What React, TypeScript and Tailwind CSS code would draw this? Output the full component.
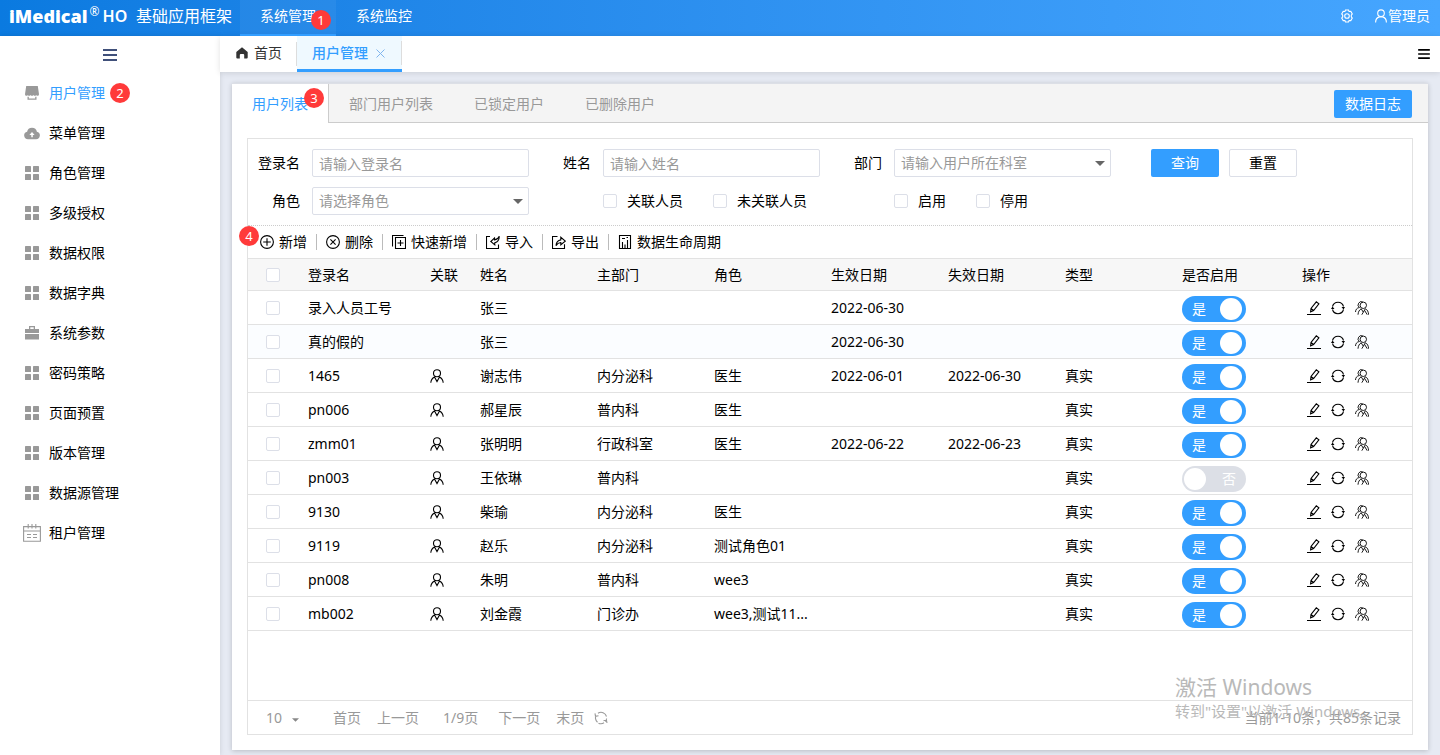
import { useState } from "react";
import type { ReactNode } from "react";

function Svg({
  children,
  size = 14,
  box = 14,
  className = "",
}: {
  children: ReactNode;
  size?: 12 | 14 | 16 | 18;
  box?: number;
  className?: string;
}) {
  const sizes = { 12: "size-3", 14: "size-[14px]", 16: "size-4", 18: "size-[18px]" };
  return (
    <svg
      aria-hidden
      viewBox={`0 0 ${box} ${box}`}
      fill="none"
      stroke="currentColor"
      strokeWidth="1.1"
      className={`shrink-0 ${sizes[size]} ${className}`}
    >
      {children}
    </svg>
  );
}

const GridIcon = () => (
  <Svg size={16} box={16}>
    <g fill="currentColor" stroke="none">
      <rect x="1" y="1" width="6" height="6" rx=".6" />
      <rect x="9" y="1" width="6" height="6" rx=".6" />
      <rect x="1" y="9" width="6" height="6" rx=".6" />
      <rect x="9" y="9" width="6" height="6" rx=".6" />
    </g>
  </Svg>
);

const StoreIcon = () => (
  <Svg size={16} box={16}>
    <g fill="currentColor" stroke="none">
      <path d="M2.200 1h11.600l1.200 8.200q0 1.600-1.400 1.600-1 0-1.400-.9-.5.9-1.400.9T9.400 9.900q-.5.9-1.400.9t-1.400-.9q-.5.9-1.400.9t-1.400-.9q-.4.9-1.400.9Q1 10.800 1 9.200z" />
      <path d="M3.500 11.800h1.300v1.700h6.400v-1.700h1.300v3h-9z" />
    </g>
  </Svg>
);

const CloudIcon = () => (
  <Svg size={16} box={16}>
    <path
      fill="currentColor"
      stroke="none"
      fillRule="evenodd"
      d="M4 14.200a3.800 3.800 0 0 1-.9-7.500A5 5 0 0 1 12.900 6.700 3.800 3.800 0 0 1 12 14.200zM7.300 12.300h1.500V9.900h1.800L8 7 5.400 9.900h1.900z"
    />
  </Svg>
);

const CaseIcon = () => (
  <Svg size={16} box={16}>
    <g fill="currentColor" stroke="none">
      <path fillRule="evenodd" d="M5 1h6v3h4v4H1V4h4zM6.300 2.300V4h3.400V2.300z" />
      <path d="M1 9h14v5.500H1z" />
    </g>
  </Svg>
);

const CalendarIcon = () => (
  <Svg size={18} box={18}>
    <path d="M.6 2.600h16.800v14.600H.6zM.6 7h16.800M5.200 0v4.500M9 0v4.500M12.800 0v4.500M4 10.500h4M10 10.500h4M4 13.500h4M10 13.500h4" />
  </Svg>
);

const HomeIcon = () => (
  <Svg size={12} box={12}>
    <path
      fill="currentColor"
      stroke="none"
      d="M6 .3 11.700 5v5.500q0 1-1 1H8.200V8q0-1-1-1H4.800q-1 0-1 1v3.500H1.300q-1 0-1-1V5z"
    />
  </Svg>
);

const GearIcon = () => (
  <Svg>
    <path d="M5.500 1h3l.6 1.500 1.700-.1 1.500 2.500-1 1.400v1.400l1 1.400-1.500 2.500-1.700-.1L8.500 13h-3l-.6-1.500-1.700.1-1.500-2.500 1-1.400V6.300l-1-1.400 1.500-2.500 1.700.1z" />
    <circle cx="7" cy="7" r="2.300" />
  </Svg>
);

const UserIcon = () => (
  <Svg>
    <circle cx="7" cy="4.200" r="3.300" />
    <path d="M1.600 13.500c0-3 1.400-5 3.800-5.600h3.200c2.400.6 3.800 2.600 3.800 5.600" />
  </Svg>
);

const LinkedUserIcon = () => (
  <Svg>
    <circle cx="7" cy="4.200" r="3.500" />
    <path d="M.8 13.800c.2-2.800 1.200-4.500 3.700-5.800L7 12.600 9.500 8c2.500 1.300 3.500 3 3.700 5.800" />
  </Svg>
);

const PlusCircleIcon = () => (
  <Svg>
    <circle cx="7" cy="7" r="6.400" />
    <path d="M7 3.200v7.600M3.200 7h7.600" />
  </Svg>
);

const CrossCircleIcon = () => (
  <Svg>
    <circle cx="7" cy="7" r="6.400" />
    <path d="m4.400 4.400 5.200 5.200M9.600 4.400 4.400 9.600" />
  </Svg>
);

const QuickAddIcon = () => (
  <Svg>
    <path d="M3.500 2.500h10v11h-10zM.5 11.500V.5h11M8.500 5v6M5.500 8h6" />
  </Svg>
);

const ImportIcon = () => (
  <Svg>
    <path d="M4 1.500H.5v12h12v-4M13.300 1.200c-1 2.300-2.300 3.400-4.800 3.700V3L4.800 6.500l4 3.300V7.700c2.800-.6 4.400-2.700 4.500-6.500z" />
  </Svg>
);

const ExportIcon = () => (
  <Svg>
    <path d="M5.500 1.500h-5v12h12V9.200M4 10.600c.3-3.300 1.700-5.200 4.800-5.700V2.300l4.500 3.900-4.500 3.600V7.500C6.800 7.700 5.300 8.600 4 10.600z" />
  </Svg>
);

const ChartIcon = () => (
  <Svg>
    <path d="M1.500.5h11v13h-11zM4.500 13.500V7M7 13.500v-4M9.500 13.500V5M4 3.500h3M8.500 2.500h1.500" />
  </Svg>
);

const EditIcon = () => (
  <Svg>
    <path d="M0 13.500h14M3.600 10.800l.4-3.300L9.300.8l2.600 2-5.300 6.700zM4 7.500l2.600 2" />
  </Svg>
);

const SyncIcon = () => (
  <Svg>
    <path d="M1.500 5.500a5.700 5.700 0 0 1 11 0M1.500 8.500a5.700 5.700 0 0 0 11 0" />
    <path fill="currentColor" stroke="none" d="M10.500 6H14l-1.500 2.500zM3.500 8H0l1.500-2.500z" />
  </Svg>
);

const GroupIcon = () => (
  <Svg>
    <g strokeWidth=".9">
      <circle cx="8.300" cy="4.300" r="3.200" />
      <path d="M4.700 6.700A2.900 2.900 0 1 1 8 1.100M.5 11c.1-2.300 1.200-3.900 3.700-4.500M3 13.700c.2-2.900 1.300-4.800 3.200-5.900l2.100 3.400 2-3.400c2.200.9 3.100 2.900 3.300 5.900M8.300 11.200 6.800 13.700M9.600 9.400l2.600 4.300" />
    </g>
  </Svg>
);

const ReloadIcon = () => (
  <Svg>
    <path d="M4 2.200a5.600 5.600 0 0 1 8.500 3.300M1.500 4.300v3.400a5.600 5.600 0 0 0 2 3.500M10 11.800a5.600 5.600 0 0 1-5.500.4M12.600 7.500a5.600 5.600 0 0 1-1.200 3.200M1 2.300l.5 3 3-.6M13 12l-.6-3-2.900.7" />
  </Svg>
);

const Bars = ({ className }: { className: string }) => (
  <svg aria-hidden viewBox="0 0 14 12" className={className} fill="currentColor">
    <path d="M0 0h14v2H0zM0 5h14v2H0zM0 10h14v2H0z" />
  </svg>
);

function Badge({ children, className = "" }: { children: ReactNode; className?: string }) {
  return (
    <span
      className={`flex size-5 items-center justify-center rounded-full bg-[#ff3a3a] text-[13px] leading-5 text-white ${className}`}
    >
      {children}
    </span>
  );
}

const checkboxCls =
  "block size-[14px] shrink-0 appearance-none rounded-[2px] border border-[#dcdfe8] bg-white checked:bg-[#339eff]";
const inputCls =
  "block h-7 w-full appearance-none rounded-[2px] border border-[#dcdfe8] bg-white px-[6px] text-sm leading-5 text-[#999] outline-none placeholder:text-[#999]";

function Field({ id, label, children }: { id: string; label: string; children: ReactNode }) {
  return (
    <div className="flex w-[291px] items-center pr-[10px]">
      <label htmlFor={id} className="mr-3 w-[52px] text-right">
        {label}
      </label>
      <div className="relative flex-1">{children}</div>
    </div>
  );
}

function Select({ id, placeholder }: { id: string; placeholder: string }) {
  return (
    <>
      <select id={id} className={inputCls}>
        <option>{placeholder}</option>
      </select>
      <svg
        aria-hidden
        viewBox="0 0 10 5"
        className="pointer-events-none absolute top-[12px] right-[6px] h-[5px] w-[10px] fill-[#666]"
      >
        <path d="M0 0h10L5 5z" />
      </svg>
    </>
  );
}

function Check({ label }: { label: string }) {
  return (
    <label className="mr-[30px] flex items-center gap-[10px] whitespace-nowrap">
      <input type="checkbox" className={checkboxCls} />
      {label}
    </label>
  );
}

function Switch({ name, initial }: { name: string; initial: boolean }) {
  const [on, setOn] = useState(initial);
  return (
    <label
      className={`relative flex h-[26px] w-16 items-center rounded-full px-[10px] text-white ${
        on ? "bg-[#339eff]" : "justify-end bg-[#dcdfe6]"
      }`}
    >
      <input
        type="checkbox"
        aria-label={`${name} 是否启用`}
        checked={on}
        onChange={() => setOn(!on)}
        className="absolute inset-0 size-full appearance-none rounded-full"
      />
      <span>{on ? "是" : "否"}</span>
      <span
        className={`pointer-events-none absolute top-[2px] size-[22px] rounded-full bg-white ${
          on ? "right-1" : "left-[2px]"
        }`}
      />
    </label>
  );
}

const MENU: { label: string; icon: () => ReactNode }[] = [
  { label: "用户管理", icon: StoreIcon },
  { label: "菜单管理", icon: CloudIcon },
  { label: "角色管理", icon: GridIcon },
  { label: "多级授权", icon: GridIcon },
  { label: "数据权限", icon: GridIcon },
  { label: "数据字典", icon: GridIcon },
  { label: "系统参数", icon: CaseIcon },
  { label: "密码策略", icon: GridIcon },
  { label: "页面预置", icon: GridIcon },
  { label: "版本管理", icon: GridIcon },
  { label: "数据源管理", icon: GridIcon },
  { label: "租户管理", icon: CalendarIcon },
];

const TOOLS: { label: string; icon: () => ReactNode }[] = [
  { label: "新增", icon: PlusCircleIcon },
  { label: "删除", icon: CrossCircleIcon },
  { label: "快速新增", icon: QuickAddIcon },
  { label: "导入", icon: ImportIcon },
  { label: "导出", icon: ExportIcon },
  { label: "数据生命周期", icon: ChartIcon },
];

const HEADERS = ["登录名", "关联", "姓名", "主部门", "角色", "生效日期", "失效日期", "类型", "是否启用", "操作"];

type Row = {
  login: string;
  linked: boolean;
  name: string;
  dept?: string;
  role?: string;
  from?: string;
  to?: string;
  type?: string;
  on: boolean;
};

const ROWS: Row[] = [
  { login: "录入人员工号", linked: false, name: "张三", from: "2022-06-30", on: true },
  { login: "真的假的", linked: false, name: "张三", from: "2022-06-30", on: true },
  { login: "1465", linked: true, name: "谢志伟", dept: "内分泌科", role: "医生", from: "2022-06-01", to: "2022-06-30", type: "真实", on: true },
  { login: "pn006", linked: true, name: "郝星辰", dept: "普内科", role: "医生", type: "真实", on: true },
  { login: "zmm01", linked: true, name: "张明明", dept: "行政科室", role: "医生", from: "2022-06-22", to: "2022-06-23", type: "真实", on: true },
  { login: "pn003", linked: true, name: "王依琳", dept: "普内科", type: "真实", on: false },
  { login: "9130", linked: true, name: "柴瑜", dept: "内分泌科", role: "医生", type: "真实", on: true },
  { login: "9119", linked: true, name: "赵乐", dept: "内分泌科", role: "测试角色01", type: "真实", on: true },
  { login: "pn008", linked: true, name: "朱明", dept: "普内科", role: "wee3", type: "真实", on: true },
  { login: "mb002", linked: true, name: "刘金霞", dept: "门诊办", role: "wee3,测试11...", type: "真实", on: true },
];

function TopBar() {
  return (
    <header className="flex h-9 items-stretch bg-linear-to-r from-[#0a7ae0] to-[#46a6ff] text-white">
      <div className="flex w-60 items-center pb-1 pl-[9px]">
        <span className="font-['Open_Sans'] text-lg leading-5 font-extrabold">iMedical</span>
        <span className="mb-2 ml-[2px] text-xs leading-4">®</span>
        <span className="ml-[3px] text-base leading-5 font-semibold">HO</span>
        <span className="ml-auto pr-2 text-base leading-5">基础应用框架</span>
      </div>
      <nav className="flex">
        <a href="#system" className="relative flex w-24 items-center justify-center border-b-2 border-[#339eff] bg-white/5 pb-[2px]">
          系统管理
          <Badge className="absolute top-[10px] right-[5px]">1</Badge>
        </a>
        <a href="#monitor" className="flex w-24 items-center justify-center pb-1">
          系统监控
        </a>
      </nav>
      <div className="ml-auto flex items-center gap-5 pr-[10px] pb-1">
        <button aria-label="设置">
          <GearIcon />
        </button>
        <button className="flex items-center">
          <UserIcon />
          管理员
        </button>
      </div>
    </header>
  );
}

function Sidebar() {
  return (
    <aside className="w-[220px] shrink-0 bg-white shadow-[0_0_5px_rgba(0,0,0,0.12)]">
      <button aria-label="收起菜单" className="flex h-[37px] w-full items-center justify-center text-[#40507a]">
        <Bars className="h-3 w-[14px]" />
      </button>
      <nav>
        {MENU.map(({ label, icon: Icon }, i) => (
          <a key={label} href={`#menu-${i}`} className="flex h-10 items-center pl-[22px]">
            <span className="flex w-[27px] items-center text-[#999]">
              <span className="flex w-[20px] justify-center">
                <Icon />
              </span>
            </span>
            <span className={i === 0 ? "text-[#339eff]" : ""}>{label}</span>
            {i === 0 ? <Badge className="ml-[5px]">2</Badge> : null}
          </a>
        ))}
      </nav>
    </aside>
  );
}

function PageTabs() {
  return (
    <div className="flex h-9 items-center bg-white shadow-[0_1px_6px_rgba(0,0,0,0.12)]">
      <button className="flex h-6 w-[77px] items-center gap-[6px] border-r border-[#ddd] pb-[2px] pl-4 text-[#333]">
        <HomeIcon />
        首页
      </button>
      <div className="flex h-9 w-[105px] items-center border-b-[3px] border-[#339eff] bg-[#eff9ff] pt-px pl-[15px] text-[#339eff]">
        <button className="font-medium">用户管理</button>
        <button aria-label="关闭" className="ml-2">
          <svg viewBox="0 0 9 9" className="size-[9px] stroke-[#7fb5ee]" fill="none">
            <path d="m.5.5 8 8M8.500.5l-8 8" />
          </svg>
        </button>
        <span className="ml-auto h-6 w-px bg-[#ddd]" />
      </div>
      <button aria-label="更多" className="mr-[10px] ml-auto">
        <Bars className="h-[10px] w-3" />
      </button>
    </div>
  );
}

function PanelTabs() {
  return (
    <div className="flex h-[39px] bg-[#f4f4f4]">
      <button className="relative border-r border-[#ccc] bg-white px-5 text-[#339eff]">
        用户列表
        <Badge className="absolute top-1 right-1">3</Badge>
      </button>
      <div className="flex flex-1 items-center border-b border-[#ccc] pt-[2px] pr-4 text-[#999]">
        {["部门用户列表", "已锁定用户", "已删除用户"].map((tab) => (
          <button key={tab} className="h-full border-r border-transparent px-5">
            {tab}
          </button>
        ))}
        <button className="ml-auto h-7 w-[78px] rounded-[2px] bg-[#339eff] text-white">数据日志</button>
      </div>
    </div>
  );
}

function SearchForm() {
  return (
    <form className="border-b border-dotted border-[#ccc] py-[10px]" onSubmit={(e) => e.preventDefault()}>
      <div className="flex">
        <Field id="login" label="登录名">
          <input id="login" placeholder="请输入登录名" className={inputCls} />
        </Field>
        <Field id="name" label="姓名">
          <input id="name" placeholder="请输入姓名" className={inputCls} />
        </Field>
        <Field id="dept" label="部门">
          <Select id="dept" placeholder="请输入用户所在科室" />
        </Field>
        <button className="ml-[30px] h-7 w-[68px] rounded-[2px] bg-[#339eff] text-white">查询</button>
        <button type="reset" className="ml-[10px] h-7 w-[68px] rounded-[2px] border border-[#dcdfe8] bg-white">
          重置
        </button>
      </div>
      <div className="mt-[10px] flex">
        <Field id="role" label="角色">
          <Select id="role" placeholder="请选择角色" />
        </Field>
        <div className="flex w-[291px] pl-16">
          <Check label="关联人员" />
          <Check label="未关联人员" />
        </div>
        <div className="flex w-[291px] pl-16">
          <Check label="启用" />
          <Check label="停用" />
        </div>
      </div>
    </form>
  );
}

function Toolbar() {
  return (
    <div className="relative flex h-[33px] items-center border-b border-[#e2e2e2] pl-[2px]">
      {TOOLS.map(({ label, icon: Icon }, i) => (
        <button
          key={label}
          className={`flex h-4 items-center gap-[5px] px-[9px] ${i > 0 ? "border-l border-[#bbb]" : "pl-[10px]"}`}
        >
          <Icon />
          {label}
        </button>
      ))}
      <Badge className="absolute top-0 -left-[9px]">4</Badge>
    </div>
  );
}

function UserTable() {
  return (
    <table className="w-full table-fixed border-separate border-spacing-0 text-left">
      <colgroup>
        <col className="w-[52px]" />
        <col className="w-[122px]" />
        <col className="w-[50px]" />
        <col className="w-[117px]" span={6} />
        <col className="w-[120px]" />
        <col />
      </colgroup>
      <thead>
        <tr className="h-8 bg-[#f7f7f7]">
          <th className="border-b border-[#e2e2e2] pl-[18px]">
            <input type="checkbox" aria-label="全选" className={checkboxCls} />
          </th>
          {HEADERS.map((h) => (
            <th key={h} className="border-b border-[#e2e2e2] px-2 font-normal">
              {h}
            </th>
          ))}
        </tr>
      </thead>
      <tbody className="[&_td]:border-b [&_td]:border-[#e2e2e2] [&_td]:px-2">
        {ROWS.map((r, i) => (
          <tr key={r.login} className={`h-[34px] ${i === 1 ? "bg-[#fbfdff]" : ""}`}>
            <td>
              <div className="pl-[10px]">
                <input type="checkbox" aria-label={r.login} className={checkboxCls} />
              </div>
            </td>
            <td>{r.login}</td>
            <td>{r.linked ? <LinkedUserIcon /> : null}</td>
            <td>{r.name}</td>
            <td>{r.dept}</td>
            <td className="whitespace-nowrap">{r.role}</td>
            <td>{r.from}</td>
            <td>{r.to}</td>
            <td>{r.type}</td>
            <td>
              <div className="pt-[3px]">
                <Switch name={r.login} initial={r.on} />
              </div>
            </td>
            <td>
              <div className="flex gap-[10px] pl-[5px]">
                <button aria-label="编辑">
                  <EditIcon />
                </button>
                <button aria-label="重置密码">
                  <SyncIcon />
                </button>
                <button aria-label="用户授权">
                  <GroupIcon />
                </button>
              </div>
            </td>
          </tr>
        ))}
      </tbody>
    </table>
  );
}

function Pager() {
  return (
    <div className="flex h-[34px] items-center border-t border-[#e2e2e2] pr-[11px] pl-[18px] text-[#999]">
      <div className="relative mr-[33px] w-[34px]">
        <select aria-label="每页条数" className="block w-full appearance-none bg-transparent text-[#999] outline-none">
          <option>10</option>
        </select>
        <svg
          aria-hidden
          viewBox="0 0 8 4"
          className="pointer-events-none absolute top-[10px] right-[1px] h-1 w-[7px] fill-[#888]"
        >
          <path d="M0 0h8L4 4z" />
        </svg>
      </div>
      <div className="flex items-center gap-4">
        <button>首页</button>
        <button>上一页</button>
        <span className="pr-1 pl-2">1/9页</span>
        <button>下一页</button>
        <button>末页</button>
      </div>
      <button aria-label="刷新" className="ml-[10px]">
        <ReloadIcon />
      </button>
      <span className="ml-auto">当前1-10条，共85条记录</span>
    </div>
  );
}

export default function App() {
  return (
    <div className="relative flex min-h-screen flex-col bg-[#e6eaf3] font-['Noto_Sans','Noto_Sans_CJK_SC',sans-serif] text-sm leading-5 text-black">
      <TopBar />
      <div className="flex flex-1">
        <Sidebar />
        <div className="flex min-w-0 flex-1 flex-col">
          <PageTabs />
          <main className="mx-3 mt-[11px] mb-[5px] flex flex-1 flex-col border-t border-[#dcdfe6] bg-white shadow-[0_1px_5px_rgba(0,0,0,0.2)]">
            <PanelTabs />
            <section className="m-[15px] flex flex-1 flex-col border border-[#e2e2e2]">
              <SearchForm />
              <Toolbar />
              <UserTable />
              <div className="min-h-10 flex-1" />
              <Pager />
            </section>
          </main>
        </div>
      </div>
      {/* system activation notice, floats above the page */}
      <div className="pointer-events-none absolute right-[77px] bottom-8 w-[188px] whitespace-nowrap text-[#b9b9b9]">
        <p className="text-[21px] leading-6">激活 Windows</p>
        <p className="text-[15px] leading-6">转到"设置"以激活 Windows。</p>
      </div>
    </div>
  );
}
